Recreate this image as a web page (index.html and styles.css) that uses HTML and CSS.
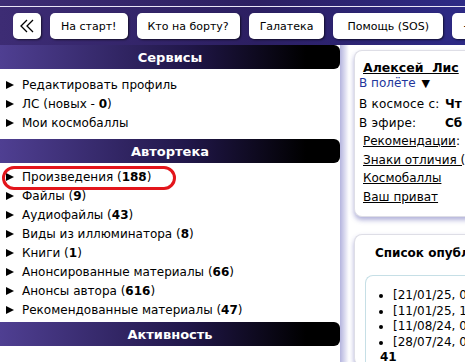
FILE: index.html
```html
<!DOCTYPE html>
<html lang="ru">

<head>
    <meta charset="UTF-8">
    <meta name="viewport" content="width=device-width, initial-scale=1.0">
    <title>Каюта</title>
    <link rel="stylesheet" href="styles.css">
</head>

<body>
    <!-- Top navigation -->
    <header class="topbar">
        <nav class="nav">
            <button class="nav-button back-button" title="Назад">
                <svg width="16" height="14" viewBox="0 0 16 14">
                    <polyline points="8,1 2,7 8,13" fill="none" stroke="#000" stroke-width="1.3" />
                    <polyline points="14,1 8,7 14,13" fill="none" stroke="#000" stroke-width="1.3" />
                </svg>
            </button>
            <button class="nav-button">На старт!</button>
            <button class="nav-button">Кто на борту?</button>
            <button class="nav-button">Галатека</button>
            <button class="nav-button nav-button-wide">Помощь (SOS)</button>
            <button class="nav-button">+</button>
        </nav>
    </header>

    <div class="page">
        <!-- Left menu -->
        <aside class="sidebar">
            <h3 class="section-title">Сервисы</h3>
            <ul class="menu menu-services">
                <li>Редактировать профиль</li>
                <li>ЛС (новых - <b>0</b>)</li>
                <li>Мои космобаллы</li>
            </ul>

            <h3 class="section-title">Автортека</h3>
            <ul class="menu menu-library">
                <li class="marked">Произведения (<b>188</b>)</li>
                <li>Файлы (<b>9</b>)</li>
                <li>Аудиофайлы (<b>43</b>)</li>
                <li>Виды из иллюминатора (<b>8</b>)</li>
                <li>Книги (<b>1</b>)</li>
                <li>Анонсированные материалы (<b>66</b>)</li>
                <li>Анонсы автора (<b>616</b>)</li>
                <li>Рекомендованные материалы (<b>47</b>)</li>
            </ul>

            <h3 class="section-title">Активность</h3>
        </aside>

        <!-- Right column -->
        <main class="content">
            <div class="card profile-card">
                <div class="profile-name">Алексей&nbsp;&nbsp;Лис</div>
                <div class="profile-status">В полёте <span class="arrow">▼</span></div>

                <div class="profile-facts">
                    <span>В космосе с:</span><b>Чт</b>
                    <span>В эфире:</span><b>Сб</b>
                </div>

                <div class="profile-links">
                    <a href="#">Рекомендации</a>:
                    <br><a href="#">Знаки отличия (</a>
                    <br><a href="#">Космобаллы</a>
                    <br><a href="#">Ваш приват</a>
                </div>
            </div>

            <div class="card list-card">
                <div class="list-title">Список опубл</div>
                <div class="list-box">
                    <ul class="pub-list">
                        <li>[21/01/25, 0</li>
                        <li>[11/01/25, 1</li>
                        <li>[11/08/24, 0</li>
                        <li>[28/07/24, 0</li>
                    </ul>
                    <div class="pub-count">41</div>
                </div>
            </div>
        </main>
    </div>
</body>

</html>
```

FILE: styles.css
```css
html,
body {
    margin: 0;
    padding: 0;
    overflow: hidden;
}

body {
    font-family: "DejaVu Sans", Verdana, sans-serif;
    font-size: 12px;
    color: #000;
    background-color: #fff;
}

/* Top bar */

.topbar {
    height: 45px;
    padding-top: 6px;
    box-sizing: border-box;
    background: linear-gradient(to right, #3d2c74, #2c1f62 55%, #2d2a86);
}

.nav {
    display: flex;
    gap: 9px;
    border-top: 1px solid #e8e4f4;
    padding: 6px 0 0 13px;
    white-space: nowrap;
}

.nav-button {
    flex: none;
    height: 26px;
    padding: 0 11px;
    font-family: inherit;
    font-size: 11px;
    color: #000;
    background-color: #fff;
    border: none;
    border-radius: 5px;
    box-shadow: 1px 1px 2px rgba(0, 0, 0, 0.6);
}

.nav-button-wide {
    padding: 0 14px;
}

.back-button {
    width: 28px;
    padding: 0;
    display: flex;
    align-items: center;
    justify-content: center;
}

/* Layout */

.page {
    display: flex;
    align-items: flex-start;
}

.sidebar {
    flex: none;
    width: 340px;
}

.content {
    flex: 1;
    min-width: 0;
    align-self: stretch;
    height: 320px;
    padding-left: 14px;
    background: linear-gradient(to right, #b4b4de, #dcdcf0 5px, #fff 9px);
}

/* Left menu */

.section-title {
    margin: 0;
    height: 24px;
    line-height: 25px;
    text-align: center;
    font-size: 13px;
    color: #fff;
    border-radius: 0 6px 6px 0;
    background: linear-gradient(to right, #4f3f92, #21174a 55%, #000 90%);
}

.menu {
    list-style: none;
    margin: 0;
    padding: 7px 0 6px 0;
}

.menu-library {
    padding: 5px 0 2px 0;
}

.menu li {
    position: relative;
    height: 19px;
    line-height: 19px;
    padding-left: 22px;
    white-space: nowrap;
}

.menu li::before {
    content: "";
    position: absolute;
    left: 6px;
    top: 5px;
    border-style: solid;
    border-width: 4.5px 0 4.5px 8px;
    border-color: transparent transparent transparent #000;
}

.menu li.marked::after {
    content: "";
    position: absolute;
    left: 2px;
    top: -2px;
    width: 168px;
    height: 18px;
    border: 3px solid #e3151b;
    border-radius: 12px;
}

/* Right column cards */

.card {
    width: 260px;
    background-color: #fff;
    border: 1px solid #dedee6;
    border-right: none;
    border-radius: 8px 0 0 8px;
    box-shadow: 0 3px 5px rgba(80, 80, 170, 0.45);
    white-space: nowrap;
}

.profile-card {
    margin-top: 5px;
    padding: 8px 0 10px 8px;
}

.profile-name {
    font-weight: bold;
    text-decoration: underline;
    line-height: 17px;
    font-size: 12.5px;
}

.profile-status {
    color: #22359b;
    line-height: 15px;
    margin-left: -4px;
}

.profile-status .arrow {
    color: #000;
    font-size: 11px;
    margin-left: 2px;
}

.profile-facts {
    display: grid;
    grid-template-columns: 86px auto;
    line-height: 19px;
    margin-top: 4px;
    margin-left: -4px;
}

.profile-facts span {
    letter-spacing: 0.2px;
}

.profile-links {
    line-height: 18.5px;
    margin-top: -1px;
}

.profile-links a {
    color: #000;
}

.list-card {
    margin-top: 17px;
    padding: 10px 0 0 10px;
    height: 120px;
}

.list-title {
    font-weight: bold;
    line-height: 17px;
    padding-left: 10px;
}

.list-box {
    margin-top: 13px;
    padding: 12px 0 0 14px;
    border: 1px solid #c6dfe6;
    border-right: none;
    border-radius: 8px 0 0 0;
}

.pub-list {
    margin: 0;
    padding-left: 13px;
    line-height: 15.5px;
}

.pub-count {
    font-weight: bold;
    line-height: 14px;
}
```
